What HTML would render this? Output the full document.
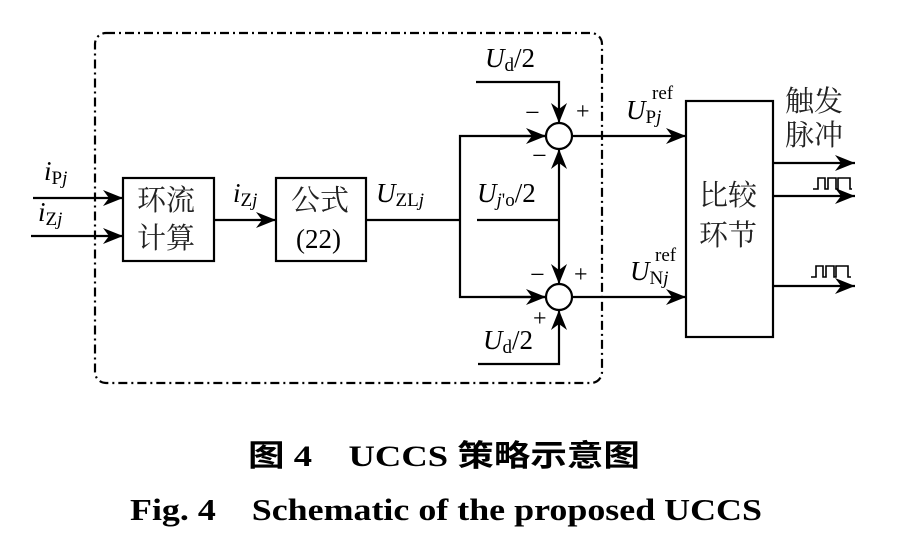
<!DOCTYPE html>
<html><head><meta charset="utf-8"><style>
html,body{margin:0;padding:0;background:#fff;}
svg{display:block;}
.t{font-family:"Liberation Serif","Noto Serif CJK SC",serif;fill:#000;}
.c{font-family:"Liberation Serif","Noto Serif CJK SC",serif;fill:#222;}
</style></head><body>
<svg width="904" height="541" viewBox="0 0 904 541" xmlns="http://www.w3.org/2000/svg">
<defs>
<marker id="a" markerWidth="22" markerHeight="16" refX="20" refY="8" orient="auto" markerUnits="userSpaceOnUse">
<path d="M0,0 L20,8 L0,16 L6,8 Z" fill="#000"/>
</marker>
</defs>
<g stroke="#000" stroke-width="2.2" fill="none">
<rect x="95" y="33" width="507" height="350" rx="11" stroke-dasharray="9,4,2,4"/>
<rect x="123" y="178" width="91" height="83"/>
<rect x="276" y="178" width="90" height="83"/>
<rect x="686" y="101" width="87" height="236"/>
<line x1="33" y1="198" x2="123" y2="198" marker-end="url(#a)"/>
<line x1="31" y1="236" x2="123" y2="236" marker-end="url(#a)"/>
<line x1="214" y1="220" x2="276" y2="220" marker-end="url(#a)"/>
<line x1="366" y1="220" x2="460" y2="220"/>
<polyline points="546,136 460,136 460,297 546,297" />
<line x1="500" y1="136" x2="546" y2="136" marker-end="url(#a)"/>
<line x1="500" y1="297" x2="546" y2="297" marker-end="url(#a)"/>
<circle cx="559" cy="136" r="13"/>
<circle cx="559" cy="297" r="13"/>
<polyline points="476,82 559,82 559,123" marker-end="url(#a)"/>
<line x1="477" y1="220" x2="559" y2="220"/>
<line x1="559" y1="220" x2="559" y2="149" marker-end="url(#a)"/>
<line x1="559" y1="220" x2="559" y2="284" marker-end="url(#a)"/>
<polyline points="478,364 559,364 559,310" marker-end="url(#a)"/>
<line x1="572" y1="136" x2="686" y2="136" marker-end="url(#a)"/>
<line x1="572" y1="297" x2="686" y2="297" marker-end="url(#a)"/>
<line x1="773" y1="163" x2="855" y2="163" marker-end="url(#a)"/>
<line x1="773" y1="196" x2="855" y2="196" marker-end="url(#a)"/>
<line x1="773" y1="286" x2="855" y2="286" marker-end="url(#a)"/>
<polyline stroke-width="1.6" points="813,189 818,189 818,178 825,178 825,189 828,189 828,178 836,178 836,189 838,189 838,178 850,178 850,189 852,189"/>
<polyline stroke-width="1.6" points="811,277 816,277 816,266 823,266 823,277 826,277 826,266 834,266 834,277 836,277 836,266 848,266 848,277 851,277"/>
</g>
<g class="t" font-size="27">
<text x="44" y="180"><tspan font-style="italic">i</tspan><tspan font-size="19" dy="4">P</tspan><tspan font-size="19" font-style="italic">j</tspan></text>
<text x="38" y="221"><tspan font-style="italic">i</tspan><tspan font-size="19" dy="4">Z</tspan><tspan font-size="19" font-style="italic">j</tspan></text>
<text x="233" y="202"><tspan font-style="italic">i</tspan><tspan font-size="19" dy="4">Z</tspan><tspan font-size="19" font-style="italic">j</tspan></text>
<text x="376" y="202"><tspan font-style="italic">U</tspan><tspan font-size="19" dy="4">ZL</tspan><tspan font-size="19" font-style="italic">j</tspan></text>
<text x="485" y="67"><tspan font-style="italic">U</tspan><tspan font-size="19" dy="4">d</tspan><tspan dy="-4">/2</tspan></text>
<text x="477" y="202"><tspan font-style="italic">U</tspan><tspan font-size="19" dy="4" font-style="italic">j</tspan><tspan font-size="19">'o</tspan><tspan dy="-4">/2</tspan></text>
<text x="483" y="349"><tspan font-style="italic">U</tspan><tspan font-size="19" dy="4">d</tspan><tspan dy="-4">/2</tspan></text>
<text x="626" y="119"><tspan font-style="italic">U</tspan><tspan font-size="19" dy="4">P</tspan><tspan font-size="19" font-style="italic">j</tspan></text>
<text x="652" y="99" font-size="19">ref</text>
<text x="630" y="280"><tspan font-style="italic">U</tspan><tspan font-size="19" dy="4">N</tspan><tspan font-size="19" font-style="italic">j</tspan></text>
<text x="655" y="261" font-size="19">ref</text>
<text x="296" y="248">(22)</text>
<text x="525" y="121" font-size="26">−</text>
<text x="576" y="119" font-size="24">+</text>
<text x="532" y="164" font-size="26">−</text>
<text x="530" y="283" font-size="26">−</text>
<text x="574" y="282" font-size="24">+</text>
<text x="533" y="326" font-size="24">+</text>
</g>
<g class="c" font-size="29">
<text x="137" y="210">环流</text>
<text x="137" y="248">计算</text>
<text x="291" y="210">公式</text>
<text x="699" y="205">比较</text>
<text x="699" y="245">环节</text>
<text x="785" y="111">触发</text>
<text x="785" y="145">脉冲</text>
</g>
<text x="248" y="466" font-size="30" font-weight="bold" textLength="392" lengthAdjust="spacingAndGlyphs" style="font-family:'Liberation Serif','Noto Sans CJK SC',sans-serif">图 4　UCCS 策略示意图</text>
<text x="130" y="520" font-size="31" font-weight="bold" textLength="632" lengthAdjust="spacingAndGlyphs" xml:space="preserve" style="font-family:'Liberation Serif',serif">Fig. 4    Schematic of the proposed UCCS</text>
</svg>
</body></html>
